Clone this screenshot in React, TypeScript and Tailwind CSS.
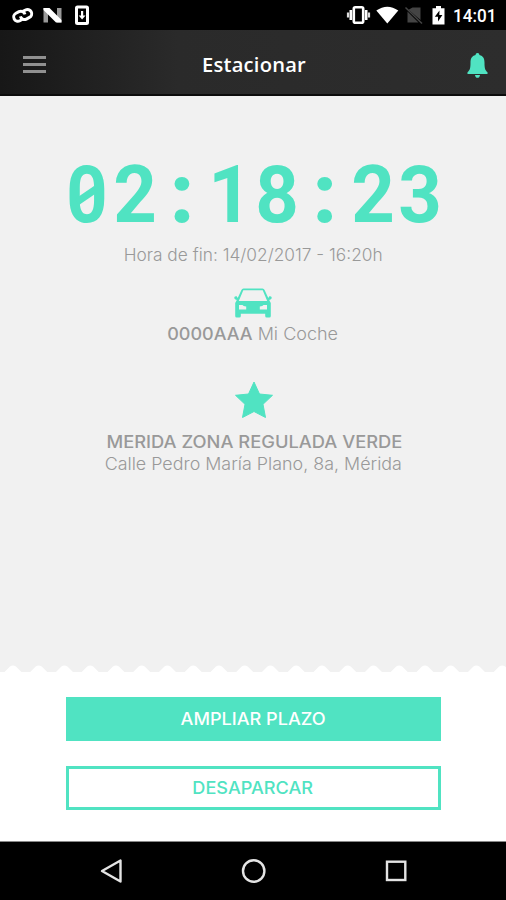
import React from "react"

const clock = ["0", "2", ":", "1", "8", ":", "2", "3"]

// one tooth of the paper edge every 25.75px
const teeth = Array.from({ length: 21 }, (_, i) => {
  const x = -12.8 + i * 25.75
  return `M${x - 9.5} 9 L${x - 3} 2.6 Q${x} .4 ${x + 3} 2.6 L${x + 9.5} 9 Z`
}).join(" ")

const StatusBar = () => {
  return (
    <div className="flex h-[30px] items-center bg-black text-white">
      <svg width="90" height="30" viewBox="0 0 90 30" fill="none">
        <g stroke="#fff" strokeWidth="3" transform="rotate(-28 22.5 15)">
          <path d="M20.5 18.8 H17.5 A4.2 4.2 0 0 1 17.5 10.4 H21 A4.2 4.2 0 0 1 25 15.6" />
          <path d="M24.5 12 H27.5 A4.2 4.2 0 0 1 27.5 20.4 H24 A4.2 4.2 0 0 1 20 15.2" />
        </g>
        <path d="M43.5 8 H48 V22.5 H43.5 Z M57 8 H61.5 V22.5 H57 Z" fill="#999" />
        <path d="M43.5 8 H49.5 L61.5 20 V22.5 H56 L43.5 10 Z" fill="#fff" />
        <rect x="76.5" y="7" width="11" height="16.5" rx="1" stroke="#fff" strokeWidth="3" />
        <path d="M81 11 H83.2 V15.5 H85.5 L82.1 19.5 L78.7 15.5 H81 Z" fill="#fff" />
      </svg>
      <svg className="ml-auto" width="105" height="30" viewBox="345 0 105 30">
        <rect x="353.8" y="7.3" width="9.4" height="15.4" rx="1.5" fill="none" stroke="#fff" strokeWidth="2.6" />
        <path d="M350.8 10 V20 M366.2 10 V20" stroke="#fff" strokeWidth="2.6" />
        <path d="M348 12.5 V17.5 M369 12.5 V17.5" stroke="#ddd" strokeWidth="2.2" />
        <path d="M376.3 10.5 Q387.3 2.8 398.3 10.5 L387.3 23.6 Z" fill="#fff" />
        <path d="M412.5 7.5 H420.5 V20 L408.5 9.8 Z M407.5 11.5 L418.5 22.5 H407.5 Z" fill="#444" />
        <path d="M405.5 7.5 L422 23.5" stroke="#444" strokeWidth="1.5" />
        <path d="M432.5 8.2 H436 V6 H441 V8.2 H444.5 V24.4 H432.5 Z" fill="#fff" />
        <path d="M439.5 10.5 L434.8 16.8 H438 V21.5 L442.4 15 H439.3 Z" fill="#000" />
      </svg>
      <span className="mr-[10px] ml-[3px] w-[43px] origin-left scale-x-95 pt-[2px] text-[18px] leading-none font-medium whitespace-nowrap">
        14:01
      </span>
    </div>
  )
}

const Header = () => {
  return (
    <header className="flex h-[66px] items-center justify-between border-b-2 border-[#0c0c0c] bg-linear-to-r from-[#171717] via-[#2a2a2a] via-35% to-[#2d2d2d] pt-[6px] pr-[18px] pl-[23px] shadow-[0_1px_2px_#00000066]">
      <div className="mb-[1px] flex w-[23px] flex-col gap-[4px]">
        <div className="h-[3px] bg-[#909090]"></div>
        <div className="h-[3px] bg-[#909090]"></div>
        <div className="h-[3px] bg-[#909090]"></div>
      </div>
      <h1 className="mr-[5px] scale-x-106 font-['Open_Sans',sans-serif] text-[19px] leading-none font-semibold tracking-[0.2px] text-white">
        Estacionar
      </h1>
      <svg width="21" height="25" viewBox="0 0 21 25" fill="#50e3c2">
        <path d="M10.5 0 C11.8 0 12.4 .8 12.4 2 C16.5 3 17.5 6 17.5 9.5 C17.5 15 18 17.2 20.5 19.2 V21 H.5 V19.2 C3 17.2 3.5 15 3.5 9.5 C3.5 6 4.5 3 8.6 2 C8.6 .8 9.2 0 10.5 0 Z" />
        <path d="M8 22 H13 C12.7 24 11.8 24.8 10.5 24.8 S8.3 24 8 22 Z" />
      </svg>
    </header>
  )
}

const Clock = () => {
  return (
    <div className="grid grid-cols-[repeat(8,47.6px)] justify-center pl-px text-[80px] leading-[80px] font-bold text-[#50e3c2]">
      {clock.map((char, idx) => {
        return (
          <span key={idx} className="relative flex justify-center">
            <span
              className={
                char === "0"
                  ? "scale-x-90"
                  : char === ":"
                    ? "[-webkit-text-stroke:2px_#50e3c2]"
                    : "scale-x-95"
              }
            >
              {char}
            </span>
            {char === "0" && (
              <svg className="absolute top-0 left-0" width="48" height="80" viewBox="0 0 48 80">
                <path d="M14 47 L33 34" stroke="#50e3c2" strokeWidth="7" />
              </svg>
            )}
          </span>
        )
      })}
    </div>
  )
}

const CarIcon = () => {
  return (
    <svg width="38" height="30" viewBox="0 0 38 30">
      <path
        fillRule="evenodd"
        fill="#50e3c2"
        d="M9.5 .5 H28.5 Q30 .5 30.6 2 L34.3 10 L35.3 8.3 Q37.8 7.8 37.8 10 Q37.5 11.5 35.2 12 L36.8 15 V28 Q36.8 29.5 35.3 29.5 H32.7 Q31.2 29.5 31.2 28 V25.7 H6.8 V28 Q6.8 29.5 5.3 29.5 H2.7 Q1.2 29.5 1.2 28 V15 L2.8 12 Q.5 11.5 .2 10 Q.2 7.8 2.7 8.3 L3.7 10 L7.4 2 Q8 .5 9.5 .5 Z M9.3 2.3 L4.8 13 H33.2 L28.7 2.3 Z M5 17 V21.5 H12.2 V18.5 Q9 18.3 8.5 17 Z M33 17 V21.5 H25.8 V18.5 Q29 18.3 29.5 17 Z"
      />
    </svg>
  )
}

const NavBar = () => {
  return (
    <nav className="h-[59px] border-t border-[#888] bg-black">
      <svg width="506" height="58" viewBox="0 842 506 58" fill="none" stroke="#e4e4e4" strokeWidth="2.4">
        <path d="M102 871 L120.5 860.5 V881.5 Z" strokeLinejoin="round" />
        <circle cx="253.7" cy="871" r="10.7" />
        <rect x="387" y="861.7" width="18.3" height="18.3" />
      </svg>
    </nav>
  )
}

const App = () => {
  return (
    <div className="flex h-[900px] w-[506px] flex-col overflow-hidden bg-white font-['Roboto',sans-serif]">
      <StatusBar />
      <Header />
      <main className="flex h-[576px] flex-col items-center bg-[#f1f1f1] pt-[59px] font-['Inter',sans-serif] text-[17px] leading-[22px] whitespace-nowrap text-[#999]">
        <div className="font-['Roboto',sans-serif]">
          <Clock />
        </div>
        <p className="mt-[9px] scale-x-[1.018] font-light">Hora de fin: 14/02/2017 - 16:20h</p>
        <div className="mt-[22px]">
          <CarIcon />
        </div>
        <p className="mt-[5px] scale-x-[1.06] font-light">
          <span className="font-medium">0000AAA</span> Mi Coche
        </p>
        <svg className="mt-[36px] ml-[1px]" width="40" height="38" viewBox="0 0 40 38">
          <path
            d="M20 1 L25.5 13 L38.5 14.3 L29 23.3 L31.5 36.5 L20 30.5 L8.5 36.5 L11 23.3 L1.5 14.3 L14.5 13 Z"
            fill="#50e3c2"
            stroke="#50e3c2"
            strokeLinejoin="round"
          />
        </svg>
        <p className="mt-[12px] scale-x-[1.077] ml-[2px] font-medium">MERIDA ZONA REGULADA VERDE</p>
        <p className="ml-[1px] scale-x-[1.052] font-light">Calle Pedro María Plano, 8a, Mérida</p>
      </main>
      <div className="h-[169px] bg-white font-['Inter',sans-serif] text-[17px] font-medium">
        <svg className="-mt-[8px] block" width="506" height="9" viewBox="0 0 506 9" fill="#fff">
          <path d={teeth} />
        </svg>
        <div className="flex flex-col items-center gap-[25px] pt-[24px]">
          <button className="h-[44px] w-[375px] bg-[#50e3c2] pt-[2px] text-white">
            <span className="inline-block scale-x-[1.065]">AMPLIAR PLAZO</span>
          </button>
          <button className="h-[44px] w-[375px] border-3 border-[#50e3c2] pt-[2px] text-[#50e3c2]">
            <span className="inline-block scale-x-[1.065]">DESAPARCAR</span>
          </button>
        </div>
      </div>
      <NavBar />
    </div>
  )
}

export default App
